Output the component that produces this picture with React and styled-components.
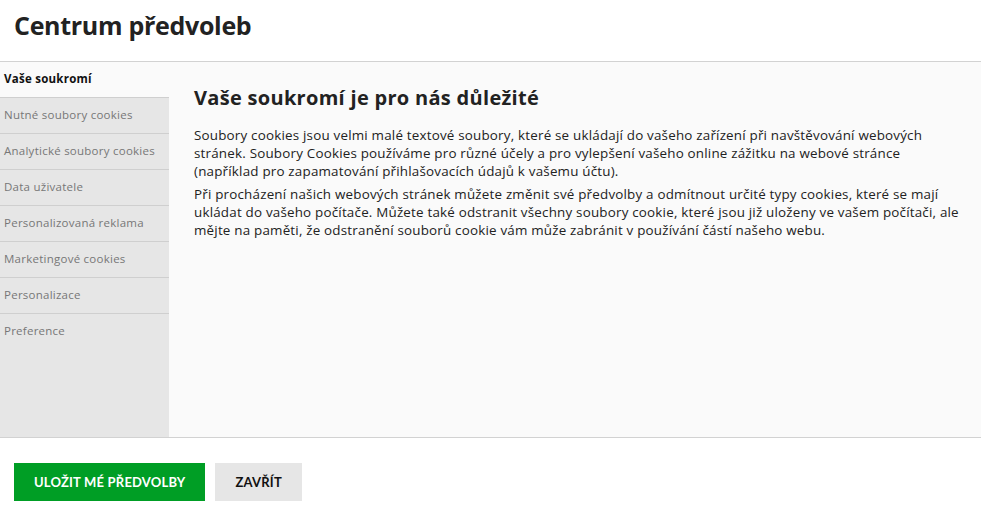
import React, { useState } from 'react';
import styled, { createGlobalStyle } from 'styled-components';

const GlobalStyle = createGlobalStyle`
  html, body {
    margin: 0;
    padding: 0;
    background: #fff;
    font-family: "Open Sans", Lato, Arial, sans-serif;
    color: #222;
  }
`;

const tabs = [
  'Vaše soukromí',
  'Nutné soubory cookies',
  'Analytické soubory cookies',
  'Data uživatele',
  'Personalizovaná reklama',
  'Marketingové cookies',
  'Personalizace',
  'Preference',
];

const App = () => {
  const [active, setActive] = useState(0);

  return (
    <>
      <GlobalStyle />
      <Wrapper>
        <Header>
          <Title>Centrum předvoleb</Title>
        </Header>
        <Body>
          <Sidebar>
            {tabs.map((t, i) => (
              <Tab key={t} active={i === active} onClick={() => setActive(i)}>
                {t}
              </Tab>
            ))}
          </Sidebar>
          <Content>
            <Heading>Vaše soukromí je pro nás důležité</Heading>
            <Text>
              Soubory cookies jsou velmi malé textové soubory, které se ukládají do vašeho zařízení při navštěvování webových
              stránek. Soubory Cookies používáme pro různé účely a pro vylepšení vašeho online zážitku na webové stránce
              (například pro zapamatování přihlašovacích údajů k vašemu účtu).
            </Text>
            <Text>
              Při procházení našich webových stránek můžete změnit své předvolby a odmítnout určité typy cookies, které se mají
              ukládat do vašeho počítače. Můžete také odstranit všechny soubory cookie, které jsou již uloženy ve vašem počítači, ale
              mějte na paměti, že odstranění souborů cookie vám může zabránit v používání částí našeho webu.
            </Text>
          </Content>
        </Body>
        <Footer>
          <Button primary>Uložit mé předvolby</Button>
          <Button>Zavřít</Button>
        </Footer>
      </Wrapper>
    </>
  );
};

const Wrapper = styled.div`
  width: 981px;
  height: 515px;
  display: flex;
  flex-direction: column;
  background: #fff;
`;

const Header = styled.header`
  height: 62px;
  box-sizing: border-box;
  display: flex;
  align-items: center;
  padding: 0 14px;
  border-bottom: 1px solid #d2d2d2;
`;

const Title = styled.h1`
  margin: 0;
  margin-top: -12px;
  font-size: 25px;
  font-weight: 700;
  color: #222;
  letter-spacing: -0.3px;
`;

const Body = styled.div`
  display: flex;
  height: 376px;
  border-bottom: 1px solid #d2d2d2;
  box-sizing: border-box;
`;

const Sidebar = styled.nav`
  width: 169px;
  flex-shrink: 0;
  background: #e6e6e6;
  display: flex;
  flex-direction: column;
`;

const Tab = styled.div`
  height: 36px;
  box-sizing: border-box;
  padding: 0 4px 3px;
  display: flex;
  align-items: center;
  font-size: 11.5px;
  letter-spacing: 0.25px;
  white-space: nowrap;
  cursor: pointer;
  color: ${p => (p.active ? '#111' : '#777')};
  font-weight: ${p => (p.active ? 700 : 400)};
  background: ${p => (p.active ? '#fafafa' : 'transparent')};
  border-bottom: 1px solid #cfcfcf;

  &:last-child {
    border-bottom: none;
  }
`;

const Content = styled.section`
  flex: 1;
  background: #fafafa;
  padding: 22px 10px 0 25px;
`;

const Heading = styled.h2`
  margin: 0 0 15px;
  font-size: 20px;
  font-weight: 700;
  letter-spacing: 0.3px;
  color: #222;
`;

const Text = styled.p`
  margin: 0 0 5px;
  max-width: 768px;
  font-size: 13.4px;
  letter-spacing: 0.2px;
  line-height: 18px;
  color: #222;
`;

const Footer = styled.footer`
  display: flex;
  gap: 10px;
  padding: 25px 14px 0;
`;

const Button = styled.button`
  height: 38px;
  padding: 0 20px;
  border: none;
  font-family: Lato, "Open Sans", Arial, sans-serif;
  font-size: 13px;
  font-weight: 700;
  text-transform: uppercase;
  letter-spacing: 0.2px;
  cursor: pointer;
  background: ${p => (p.primary ? '#009e25' : '#e6e6e6')};
  color: ${p => (p.primary ? '#fff' : '#111')};
`;

export default App;
